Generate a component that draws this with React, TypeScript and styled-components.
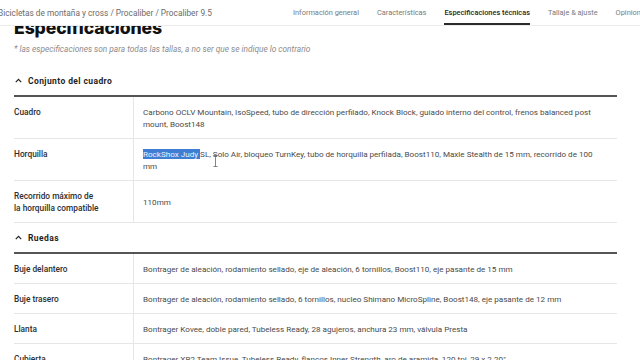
import React from 'react';
import styled, { createGlobalStyle } from 'styled-components';

const GlobalStyle = createGlobalStyle`
  html, body {
    margin: 0;
    background: #ffffff;
    overflow: hidden;
  }
  body {
    font-family: Roboto, "Liberation Sans", Arial, sans-serif;
    color: #333333;
  }
`;

interface SpecRow {
  label: string[];
  value: React.ReactNode;
}

interface SpecSection {
  title: string;
  rows: SpecRow[];
}

const Header = styled.header`
  position: fixed;
  top: 0;
  left: 0;
  right: 0;
  height: 25px;
  display: flex;
  align-items: stretch;
  background: #ffffff;
  border-bottom: 1px solid #ededed;
  overflow: hidden;
  z-index: 10;
`;

const Breadcrumb = styled.div`
  flex: 0 0 295px;
  display: flex;
  align-items: center;
  margin-left: -2px;
  font-size: 8.3px;
  color: #6b6b6b;
  white-space: nowrap;
`;

const Tabs = styled.nav`
  flex: none;
  display: flex;
  gap: 18px;
`;

const Tab = styled.a<{ $active?: boolean }>`
  display: flex;
  align-items: center;
  box-sizing: border-box;
  padding-top: 2px;
  font-size: 7.4px;
  font-weight: ${(p) => (p.$active ? 500 : 400)};
  color: ${(p) => (p.$active ? '#1f1f1f' : '#7a7a7a')};
  border-bottom: 2px solid ${(p) => (p.$active ? '#2b2b2b' : 'transparent')};
  white-space: nowrap;
`;

const Main = styled.main`
  padding: 18px 23px 0 14px;
`;

const Title = styled.h1`
  margin: 0;
  font-family: Inter, Roboto, sans-serif;
  font-size: 17.6px;
  line-height: 20px;
  font-weight: 800;
  color: #111111;
  letter-spacing: -0.1px;
`;

const Note = styled.p`
  margin: 5px 0 0;
  font-size: 8.3px;
  line-height: 12px;
  font-style: italic;
  color: #8c8c8c;
`;

const Section = styled.section``;

const SectionHeader = styled.div<{ $first?: boolean }>`
  height: 29px;
  margin-top: ${(p) => (p.$first ? '11px' : '0')};
  display: flex;
  align-items: center;
  gap: 6px;
  padding-left: 1px;
  font-size: 8.5px;
  font-weight: 700;
  letter-spacing: 0.4px;
  color: #1f1f1f;
`;

const Table = styled.div`
  border-top: 2px solid #555555;
`;

const Row = styled.div`
  display: grid;
  grid-template-columns: 120px 1fr;
  border-bottom: 1px solid #e6e6e6;
  font-size: 8.1px;
  line-height: 12px;
`;

const Label = styled.div`
  padding: 8.5px 0;
  border-right: 1px solid #e6e6e6;
  font-size: 8.3px;
  font-weight: 500;
  color: #2e2e2e;
`;

const Value = styled.div`
  position: relative;
  display: flex;
  align-items: center;
  padding: 8.5px 9px;
  color: #4a4a4a;
`;

const Selected = styled.span`
  background: #3f7fd3;
  color: #eaf2ff;
`;

const Cursor = styled.svg`
  position: absolute;
  left: 79px;
  top: 16px;
`;

function Chevron(): React.ReactElement {
  return (
    <svg width="7" height="5" viewBox="0 0 7 5">
      <path d="M0.8 4.2 L3.5 1.4 L6.2 4.2" fill="none" stroke="#222" strokeWidth="1.2" />
    </svg>
  );
}

const sections: SpecSection[] = [
  {
    title: 'Conjunto del cuadro',
    rows: [
      {
        label: ['Cuadro'],
        value:
          'Carbono OCLV Mountain, IsoSpeed, tubo de dirección perfilado, Knock Block, guiado interno del control, frenos balanced post mount, Boost148',
      },
      {
        label: ['Horquilla'],
        value: (
          <span>
            <Selected>RockShox Judy </Selected>SL, Solo Air, bloqueo TurnKey, tubo de horquilla perfilada, Boost110, Maxle
            Stealth de 15 mm, recorrido de 100 mm
          </span>
        ),
      },
      { label: ['Recorrido máximo de', 'la horquilla compatible'], value: '110mm' },
    ],
  },
  {
    title: 'Ruedas',
    rows: [
      {
        label: ['Buje delantero'],
        value: 'Bontrager de aleación, rodamiento sellado, eje de aleación, 6 tornillos, Boost110, eje pasante de 15 mm',
      },
      {
        label: ['Buje trasero'],
        value:
          'Bontrager de aleación, rodamiento sellado, 6 tornillos, nucleo Shimano MicroSpline, Boost148, eje pasante de 12 mm',
      },
      {
        label: ['Llanta'],
        value: 'Bontrager Kovee, doble pared, Tubeless Ready, 28 agujeros, anchura 23 mm, válvula Presta',
      },
      {
        label: ['Cubierta'],
        value: 'Bontrager XR2 Team Issue, Tubeless Ready, flancos Inner Strength, aro de aramida, 120 tpi, 29 x 2.20"',
      },
    ],
  },
];

const tabs = ['Información general', 'Características', 'Especificaciones técnicas', 'Tallaje & ajuste', 'Opiniones'];

export default function App(): React.ReactElement {
  return (
    <>
      <GlobalStyle />
      <Header>
        <Breadcrumb>Bicicletas de montaña y cross / Procaliber / Procaliber 9.5</Breadcrumb>
        <Tabs>
          {tabs.map((t) => (
            <Tab key={t} $active={t === 'Especificaciones técnicas'}>
              {t}
            </Tab>
          ))}
        </Tabs>
      </Header>
      <Main>
        <Title>Especificaciones</Title>
        <Note>* las especificaciones son para todas las tallas, a no ser que se indique lo contrario</Note>
        {sections.map((section, i) => (
          <Section key={section.title}>
            <SectionHeader $first={i === 0}>
              <Chevron />
              {section.title}
            </SectionHeader>
            <Table>
              {section.rows.map((row) => (
                <Row key={row.label.join(' ')}>
                  <Label>
                    {row.label.map((l) => (
                      <div key={l}>{l}</div>
                    ))}
                  </Label>
                  <Value>
                    {row.value}
                    {row.label[0] === 'Horquilla' && (
                      <Cursor width="5" height="12" viewBox="0 0 5 12">
                        <path d="M0.5 0.5 H4.5 M2.5 0.5 V11.5 M0.5 11.5 H4.5" stroke="#666" strokeWidth="0.8" fill="none" />
                      </Cursor>
                    )}
                  </Value>
                </Row>
              ))}
            </Table>
          </Section>
        ))}
      </Main>
    </>
  );
}
